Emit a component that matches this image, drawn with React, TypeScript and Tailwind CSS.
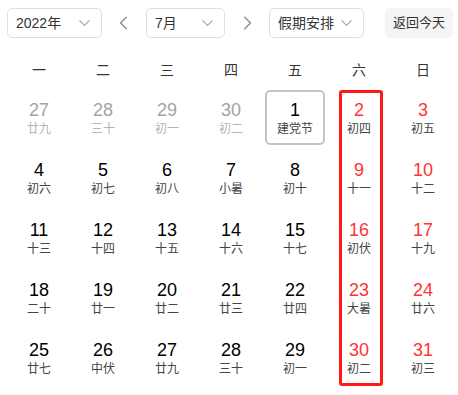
import React from 'react';

type Day = { num: number; lunar: string; other?: boolean; today?: boolean };

const weekdays = ['一', '二', '三', '四', '五', '六', '日'];

const rows: Day[][] = [
  [
    { num: 27, lunar: '廿九', other: true },
    { num: 28, lunar: '三十', other: true },
    { num: 29, lunar: '初一', other: true },
    { num: 30, lunar: '初二', other: true },
    { num: 1, lunar: '建党节', today: true },
    { num: 2, lunar: '初四' },
    { num: 3, lunar: '初五' },
  ],
  [
    { num: 4, lunar: '初六' },
    { num: 5, lunar: '初七' },
    { num: 6, lunar: '初八' },
    { num: 7, lunar: '小暑' },
    { num: 8, lunar: '初十' },
    { num: 9, lunar: '十一' },
    { num: 10, lunar: '十二' },
  ],
  [
    { num: 11, lunar: '十三' },
    { num: 12, lunar: '十四' },
    { num: 13, lunar: '十五' },
    { num: 14, lunar: '十六' },
    { num: 15, lunar: '十七' },
    { num: 16, lunar: '初伏' },
    { num: 17, lunar: '十九' },
  ],
  [
    { num: 18, lunar: '二十' },
    { num: 19, lunar: '廿一' },
    { num: 20, lunar: '廿二' },
    { num: 21, lunar: '廿三' },
    { num: 22, lunar: '廿四' },
    { num: 23, lunar: '大暑' },
    { num: 24, lunar: '廿六' },
  ],
  [
    { num: 25, lunar: '廿七' },
    { num: 26, lunar: '中伏' },
    { num: 27, lunar: '廿九' },
    { num: 28, lunar: '三十' },
    { num: 29, lunar: '初一' },
    { num: 30, lunar: '初二' },
    { num: 31, lunar: '初三' },
  ],
];

function Chevron({ dir = 'down', className = '' }: { dir?: 'down' | 'left' | 'right'; className?: string }) {
  const d = dir === 'down' ? 'M2 4l5 5 5-5' : dir === 'left' ? 'M9 2L4 7l5 5' : 'M5 2l5 5-5 5';
  return (
    <svg viewBox="0 0 14 14" className={className} fill="none" stroke="currentColor" strokeWidth="1.3" strokeLinecap="round" strokeLinejoin="round">
      <path d={d} />
    </svg>
  );
}

function Select({ label, width }: { label: string; width: string }) {
  return (
    <div className={`${width} h-[30px] flex items-center justify-between pl-[8px] pr-[10px] border border-[#dcdfe6] rounded-[5px] bg-white`}>
      <span className="text-[14px] text-[#333] whitespace-nowrap">{label}</span>
      <Chevron className="w-[13px] h-[13px] text-[#a8abb2] shrink-0" />
    </div>
  );
}

export default function App() {
  return (
    <div className="relative w-[458px] h-[395px] bg-white font-['Liberation_Sans','Noto_Sans_CJK_SC',sans-serif]">
      <div className="flex items-center pt-[8px] pl-[7px]">
        <Select label="2022年" width="w-[95px]" />
        <div className="w-[44px] flex justify-center">
          <Chevron dir="left" className="w-[16px] h-[16px] text-[#8c8f96]" />
        </div>
        <Select label="7月" width="w-[79px]" />
        <div className="w-[44px] flex justify-center">
          <Chevron dir="right" className="w-[16px] h-[16px] text-[#8c8f96]" />
        </div>
        <Select label="假期安排" width="w-[95px]" />
        <button className="ml-[21px] w-[68px] h-[30px] rounded-[5px] bg-[#f4f4f5] text-[13px] text-[#333] whitespace-nowrap">返回今天</button>
      </div>

      <div className="pl-[7px] pr-[3px] mt-[22px]">
        <div className="grid grid-cols-7 h-[20px] items-center">
          {weekdays.map((w) => (
            <div key={w} className="text-center text-[14px] text-[#333]">{w}</div>
          ))}
        </div>
        <div className="grid grid-cols-7 gap-y-[5px] mt-[10px]">
          {rows.flat().map((d, i) => {
            const weekend = i % 7 >= 5;
            const numColor = d.other ? 'text-[#a3a3a3]' : weekend ? 'text-[#ff3333]' : 'text-black';
            const lunarColor = d.other ? 'text-[#b5b5b5]' : 'text-[#444]';
            return (
              <div
                key={i}
                className={`mx-[2px] h-[55px] pt-[2px] flex flex-col items-center justify-center rounded-[5px] ${d.today ? 'border-2 border-[#c0c4cc]' : ''}`}
              >
                <span className={`text-[18px] leading-[22px] ${numColor}`}>{d.num}</span>
                <span className={`text-[12px] leading-[17px] ${lunarColor}`}>{d.lunar}</span>
              </div>
            );
          })}
        </div>
      </div>

      <div className="absolute left-[339px] top-[90px] w-[44px] h-[296px] border-[3px] border-[#ff1a1a] rounded-[3px]" />
    </div>
  );
}
